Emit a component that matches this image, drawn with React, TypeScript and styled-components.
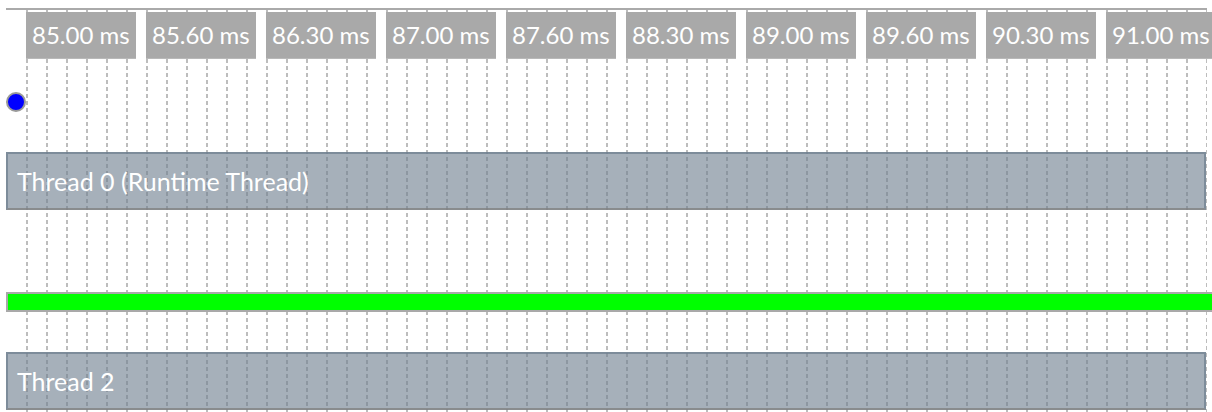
import React from "react";
import styled, { createGlobalStyle } from "styled-components";

const Global = createGlobalStyle`
  html, body { margin: 0; padding: 0; background: #fff; overflow: hidden; }
  body { font-family: Lato, "Open Sans", sans-serif; }
`;

const Page = styled.div`
  width: 1212px;
  height: 412px;
  padding-top: 8px;
  box-sizing: border-box;
`;

const Timeline = styled.div`
  margin-left: 6px;
  width: 1201px;
  height: 404px;
  box-sizing: border-box;
  border-top: 2px solid #aaaaaa;
  display: flex;
  flex-direction: column;
  align-items: flex-start;
  background-color: #fff;
  background-image:
    linear-gradient(to right, #fff 20px, transparent 20px),
    repeating-linear-gradient(to bottom, transparent 0 4px, #fff 4px 7px),
    repeating-linear-gradient(to right, #bdbdbd 0 2px, transparent 2px 20px);
  background-repeat: no-repeat;
  background-size: 100% 100%;
`;

const Axis = styled.div`
  display: flex;
  gap: 10px;
  margin-top: 2px;
  margin-left: 20px;
`;

const TickLabel = styled.div`
  flex: 0 0 110px;
  height: 47px;
  box-sizing: border-box;
  background: #a9a9a9;
  border-bottom: 1px solid #b9b9b9;
  color: #fff;
  font-size: 24px;
  line-height: 46px;
  padding-left: 6px;
  white-space: nowrap;
`;

const Marker = styled.div`
  margin-top: 33px;
  width: 20px;
  height: 20px;
  box-sizing: border-box;
  border-radius: 50%;
  background: #0000ff;
  border: 2px solid #9a9a9a;
`;

const ThreadBar = styled.div<{ $gap: number }>`
  margin-top: ${(p) => p.$gap}px;
  width: 1200px;
  height: 58px;
  box-sizing: border-box;
  background: rgba(112, 128, 144, 0.62);
  border: 2px solid rgba(112, 128, 144, 0.75);
  border-bottom-color: rgba(128, 128, 128, 0.75);
  color: #fff;
  font-size: 25px;
  display: flex;
  align-items: center;
  padding-left: 9px;
  white-space: nowrap;
`;

const TaskBar = styled.div`
  margin-top: 82px;
  width: 1212px;
  height: 20px;
  box-sizing: border-box;
  background: #00ff00;
  border: 2px solid #a9a9a9;
  flex-shrink: 0;
`;

const ticks = [
  "85.00 ms",
  "85.60 ms",
  "86.30 ms",
  "87.00 ms",
  "87.60 ms",
  "88.30 ms",
  "89.00 ms",
  "89.60 ms",
  "90.30 ms",
  "91.00 ms",
];

export default function App() {
  return (
    <>
      <Global />
      <Page>
        <Timeline>
          <Axis>
            {ticks.map((t) => (
              <TickLabel key={t}>{t}</TickLabel>
            ))}
          </Axis>
          <Marker />
          <ThreadBar $gap={40}>Thread 0 (Runtime Thread)</ThreadBar>
          <TaskBar />
          <ThreadBar $gap={40}>Thread 2</ThreadBar>
        </Timeline>
      </Page>
    </>
  );
}
